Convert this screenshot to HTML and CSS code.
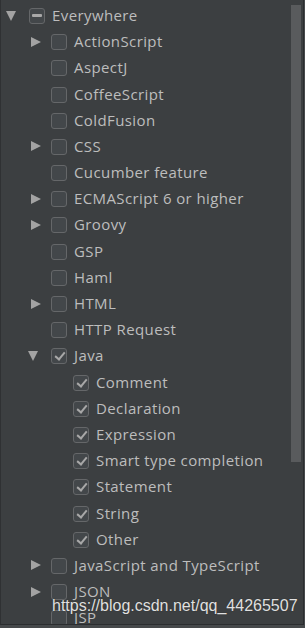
FILE: index.html
```html
<!DOCTYPE html>
<html>
<head>
<meta charset="utf-8">
<link rel="stylesheet" href="styles.css">
</head>
<body>
<div class="panel">
  <ul class="tree">
    <li class="row lv0"><span class="arrow down"></span><span class="cb partial"></span><span class="label">Everywhere</span></li>
    <li class="row lv1"><span class="arrow right"></span><span class="cb"></span><span class="label">ActionScript</span></li>
    <li class="row lv1"><span class="arrow"></span><span class="cb"></span><span class="label">AspectJ</span></li>
    <li class="row lv1"><span class="arrow"></span><span class="cb"></span><span class="label">CoffeeScript</span></li>
    <li class="row lv1"><span class="arrow"></span><span class="cb"></span><span class="label">ColdFusion</span></li>
    <li class="row lv1"><span class="arrow right"></span><span class="cb"></span><span class="label">CSS</span></li>
    <li class="row lv1"><span class="arrow"></span><span class="cb"></span><span class="label">Cucumber feature</span></li>
    <li class="row lv1"><span class="arrow right"></span><span class="cb"></span><span class="label">ECMAScript 6 or higher</span></li>
    <li class="row lv1"><span class="arrow right"></span><span class="cb"></span><span class="label">Groovy</span></li>
    <li class="row lv1"><span class="arrow"></span><span class="cb"></span><span class="label">GSP</span></li>
    <li class="row lv1"><span class="arrow"></span><span class="cb"></span><span class="label">Haml</span></li>
    <li class="row lv1"><span class="arrow right"></span><span class="cb"></span><span class="label">HTML</span></li>
    <li class="row lv1"><span class="arrow"></span><span class="cb"></span><span class="label">HTTP Request</span></li>
    <li class="row lv1"><span class="arrow down"></span><span class="cb checked"></span><span class="label">Java</span></li>
    <li class="row lv2"><span class="arrow"></span><span class="cb checked"></span><span class="label">Comment</span></li>
    <li class="row lv2"><span class="arrow"></span><span class="cb checked"></span><span class="label">Declaration</span></li>
    <li class="row lv2"><span class="arrow"></span><span class="cb checked"></span><span class="label">Expression</span></li>
    <li class="row lv2"><span class="arrow"></span><span class="cb checked"></span><span class="label">Smart type completion</span></li>
    <li class="row lv2"><span class="arrow"></span><span class="cb checked"></span><span class="label">Statement</span></li>
    <li class="row lv2"><span class="arrow"></span><span class="cb checked"></span><span class="label">String</span></li>
    <li class="row lv2"><span class="arrow"></span><span class="cb checked"></span><span class="label">Other</span></li>
    <li class="row lv1"><span class="arrow right"></span><span class="cb"></span><span class="label">JavaScript and TypeScript</span></li>
    <li class="row lv1"><span class="arrow right"></span><span class="cb"></span><span class="label">JSON</span></li>
    <li class="row lv1"><span class="arrow"></span><span class="cb"></span><span class="label">JSP</span></li>
  </ul>
  <div class="scroll-thumb"></div>
  <div class="watermark">https://blog.csdn.net/qq_44265507</div>
</div>
</body>
</html>
```
FILE: styles.css
```css
html, body {
  margin: 0;
  padding: 0;
  background: #46494b;
}
body {
  width: 305px;
  height: 628px;
  overflow: hidden;
}
.panel {
  position: relative;
  width: 302px;
  height: 624px;
  background: #3c3f41;
  border-left: 1px solid #2f3133;
  border-right: 1px solid #2b2d2f;
  border-bottom: 1px solid #2b2d2f;
  overflow: hidden;
}
.tree {
  list-style: none;
  margin: 0;
  padding: 2.9px 0 0 0;
}
.row {
  display: flex;
  align-items: center;
  height: 26.2px;
  font-family: "Open Sans", "Noto Sans", sans-serif;
  font-size: 15px;
  letter-spacing: 0.4px;
  color: #bdbdbd;
  white-space: nowrap;
}
.label {
  padding-bottom: 2px;
}
.lv0 { padding-left: 0; }
.lv1 { padding-left: 22px; }
.lv2 { padding-left: 44px; }
.arrow {
  width: 22px;
  height: 12px;
  flex: none;
  position: relative;
}
.arrow.down::before {
  content: "";
  position: absolute;
  left: 5px;
  top: 1px;
  border-left: 5.5px solid transparent;
  border-right: 5.5px solid transparent;
  border-top: 10px solid #a3a3a3;
}
.arrow.right::before {
  content: "";
  position: absolute;
  left: 8px;
  top: 0.5px;
  border-top: 5.5px solid transparent;
  border-bottom: 5.5px solid transparent;
  border-left: 10px solid #a3a3a3;
}
.cb {
  flex: none;
  width: 14px;
  height: 14px;
  margin-left: 6px;
  margin-right: 7px;
  border: 1px solid #656769;
  border-radius: 3px;
  background: #43474a;
  position: relative;
}
.cb.partial::after {
  content: "";
  position: absolute;
  left: 2px;
  top: 5px;
  width: 10px;
  height: 3px;
  border-radius: 1px;
  background: #a8a8a8;
}
.cb.checked::after {
  content: "";
  position: absolute;
  left: 4.5px;
  top: 1px;
  width: 4px;
  height: 8px;
  border-right: 2px solid #a8a8a8;
  border-bottom: 2px solid #a8a8a8;
  transform: rotate(40deg);
}
.scroll-thumb {
  position: absolute;
  left: 290px;
  top: 5px;
  width: 10px;
  height: 457px;
  background: #595b5d;
}
.watermark {
  position: absolute;
  left: 51px;
  top: 597px;
  font-family: "Liberation Sans", Arial, sans-serif;
  font-size: 16px;
  color: #e0e0e0;
  text-shadow: 0 0 1px #222;
  white-space: nowrap;
}
```
